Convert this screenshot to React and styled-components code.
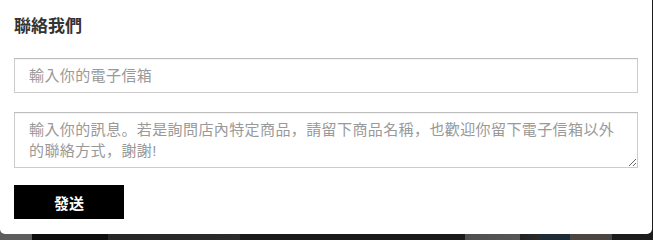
import React from "react";
import styled, { createGlobalStyle } from "styled-components";

const fontStack = `"Liberation Sans", "Noto Sans CJK JP", "Noto Sans CJK TC", sans-serif`;

const GlobalStyle = createGlobalStyle`
  html, body {
    margin: 0;
    padding: 0;
  }
  body {
    width: 653px;
    height: 240px;
    overflow: hidden;
    background: linear-gradient(
      to right,
      #5c5c5c 0px, #5c5c5c 32px,
      #0d0d0d 32px, #0d0d0d 108px,
      #262626 108px, #2b2b2b 240px,
      #1a1a1a 240px, #1a1a1a 465px,
      #4f4f4f 465px, #555 520px,
      #222 520px, #2a2a2a 540px,
      #1e2a36 540px, #1e2a36 570px,
      #4a4540 570px, #4a4540 612px,
      #1c1c1c 612px
    );
    font-family: ${fontStack};
  }
`;

const Modal = styled.div`
  width: 652px;
  height: 234px;
  box-sizing: border-box;
  background: #fff;
  border-radius: 0 0 5px 5px;
  padding: 14px 14px 15px;
  display: flex;
  flex-direction: column;
`;

const Title = styled.h4`
  margin: 0 0 18px;
  font-size: 17px;
  line-height: 26px;
  font-weight: 700;
  color: #333;
`;

const fieldBase = `
  display: block;
  width: 624px;
  box-sizing: border-box;
  border: 1px solid #ccc;
  border-top-color: #bdbdbd;
  box-shadow: inset 0 1px 1px rgba(0, 0, 0, 0.05);
  border-radius: 0;
  background: #fff;
  font-family: ${fontStack};
  font-size: 15px;
  letter-spacing: 0.4px;
  color: #333;
  outline: none;
  &::placeholder {
    color: #999;
  }
`;

const EmailInput = styled.input`
  ${fieldBase}
  height: 35px;
  padding: 0 14px;
  margin: 0 0 19px;
`;

const MessageArea = styled.textarea`
  ${fieldBase}
  height: 56px;
  padding: 6px 14px;
  line-height: 21px;
  margin: 0 0 17px;
  resize: vertical;
`;

const SendButton = styled.button`
  width: 110px;
  height: 34px;
  border: none;
  border-radius: 0;
  background: #000;
  color: #fff;
  font-family: ${fontStack};
  font-size: 15px;
  font-weight: 700;
  cursor: pointer;
  padding: 0;
`;

export default function App() {
  return (
    <>
      <GlobalStyle />
      <Modal>
        <Title>聯絡我們</Title>
        <EmailInput type="email" placeholder="輸入你的電子信箱" />
        <MessageArea placeholder="輸入你的訊息。若是詢問店內特定商品，請留下商品名稱，也歡迎你留下電子信箱以外的聯絡方式，謝謝!" />
        <SendButton>發送</SendButton>
      </Modal>
    </>
  );
}
